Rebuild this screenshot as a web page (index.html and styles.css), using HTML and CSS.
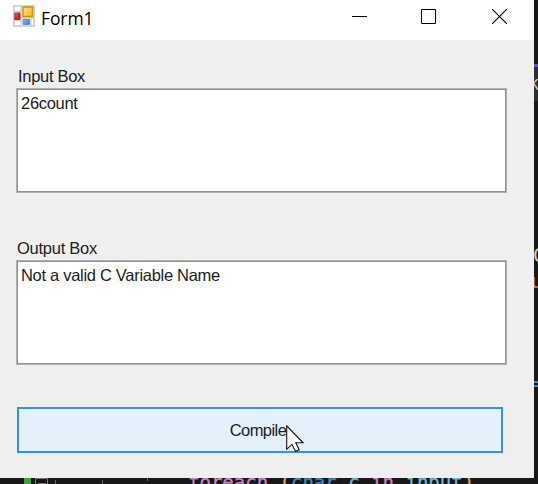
FILE: index.html
```html
<!DOCTYPE html>
<html lang="en">
<head>
<meta charset="utf-8">
<title>Form1</title>
<link rel="stylesheet" href="styles.css">
</head>
<body>
<div class="desktop">
  <div class="editor" aria-hidden="true">
    <span class="accent"></span>
    <span class="tab">k</span>
    <span class="frag frag-call">C</span>
    <span class="frag frag-string">u</span>
    <span class="frag frag-op">=</span>
    <span class="change-mark"></span>
    <svg class="guides" width="150" height="6" viewBox="0 0 150 6"><path d="M.5 6V.5h12V6M3 5.500h8" fill="none" stroke="#777"/><path d="M20.500 2v4M67.500 2v4M112.500 0v3" stroke="#666"/></svg>
    <span class="code"><span class="flow">foreach</span> <span class="brace">(</span><span class="type">char</span> <span class="var">c</span> <span class="flow">in</span> <span class="var">input</span><span class="brace">)</span></span>
  </div>
  <main class="window">
    <header class="titlebar">
      <svg class="app-icon" width="22" height="22" viewBox="0 0 22 22">
        <defs>
          <linearGradient id="gold" x2="1" y2="1"><stop stop-color="#ffe47c"/><stop offset="1" stop-color="#f2b91c"/></linearGradient>
          <linearGradient id="red" x2="1" y2="1"><stop stop-color="#e58a7c"/><stop offset=".5" stop-color="#c53328"/><stop offset="1" stop-color="#9e211a"/></linearGradient>
          <linearGradient id="blue" x2="1" y2="1"><stop stop-color="#83b5f5"/><stop offset="1" stop-color="#3c78d8"/></linearGradient>
        </defs>
        <path d="M1 1h20v20H1z" fill="#fff" stroke="#c8c8c8" stroke-width="1.600"/>
        <path d="M8 1v20M1 6.500h8M1 15.500h8M8 13h13M18 13v8" stroke="#ccc" stroke-width="1.400"/>
        <path d="M10 2h9.500v9.500H10z" fill="url(#gold)" stroke="#c39518" stroke-width="1.500"/>
        <path d="M1.800 8h5.200v6.500H1.800z" fill="url(#red)" stroke="#a82b25"/>
        <path d="M10 14.500h6.500v5H10z" fill="url(#blue)" stroke="#5b91e2"/>
      </svg>
      <h1 class="title">Form1</h1>
      <div class="controls">
        <svg width="15" height="15" viewBox="0 0 15 15"><path d="M0 7.500h15" stroke="#000"/></svg>
        <svg width="15" height="15" viewBox="0 0 15 15"><path d="M.5.5h14v14H.5z" fill="none" stroke="#000"/></svg>
        <svg class="close" width="15" height="15" viewBox="0 0 15 15"><path d="M0 0l15 15M15 0L0 15" stroke="#000" stroke-width="1.100"/></svg>
      </div>
    </header>
    <section class="form">
      <div class="label label-in">Input Box</div>
      <div class="box"><span class="value-in">26count</span></div>
      <div class="label label-out">Output Box</div>
      <div class="box"><span class="value-out">Not a valid C Variable Name</span></div>
      <button class="compile">Compile</button>
    </section>
  </main>
  <svg class="cursor" width="19" height="28" viewBox="0 0 19 28"><path d="M.7.8v23.500l5.300-5 3.500 7.200 3.700-1.700-3.400-7h7.300z" fill="#fff" stroke="#111" stroke-width="1.100"/></svg>
</div>
</body>
</html>
```
FILE: styles.css
```css
* { box-sizing: border-box; }
body { margin: 0; overflow: hidden; }
.desktop {
  position: relative;
  width: 538px;
  height: 484px;
  overflow: hidden;
  background: #181818;
  font-family: "Liberation Sans", Arial, sans-serif;
}
.window {
  position: relative;
  width: 534px;
  height: 478px;
  background: #efefef;
}
.titlebar {
  display: flex;
  align-items: flex-start;
  height: 40px;
  padding: 5px 27px 0 13px;
  background: #fff;
}
.title {
  margin: 2px 0 0 6px;
  font: 400 17.500px/22px "Open Sans", "Noto Sans", sans-serif;
  letter-spacing: -0.1px;
  color: #000;
}
.controls {
  display: flex;
  gap: 54px;
  margin: 4px 0 0 auto;
}
.controls svg { display: block; }
.controls .close { margin-left: 2px; }
.form {
  display: flex;
  flex-direction: column;
  padding: 26px 27px 0 16px;
  font-size: 16.500px;
  line-height: 20px;
  color: #1c1c24;
}
.label { height: 22px; white-space: nowrap; }
.label-in { padding-left: 2px; letter-spacing: -0.3px; }
.label-out { margin-top: 45px; padding-left: 1px; letter-spacing: -0.25px; }
.box {
  height: 105px;
  padding: 4px;
  background: #fff;
  border: 1px solid #b0b0b0;
  box-shadow: inset 0 0 0 1px #929292;
  white-space: nowrap;
}
.value-in, .value-out { letter-spacing: -0.3px; }
.compile {
  width: 486px;
  height: 46px;
  margin: 42px 0 0 1px;
  padding: 0 4px 0 0;
  border: 2px solid #3493e0;
  background: #e4f0fa;
  color: #1c1c24;
  font: inherit;
  letter-spacing: -0.55px;
}
.cursor { position: absolute; left: 286px; top: 425px; }
.editor {
  position: absolute;
  inset: 0;
  font: 19px/24px "DejaVu Sans Mono", monospace;
}
.editor > * { position: absolute; }
.accent { left: 534px; top: 64px; width: 4px; height: 3px; background: #6552c6; }
.tab { left: 528px; top: 67px; width: 10px; height: 34px; background: #2e2e2e; color: #c9b9a4; line-height: 32px; }
.frag-call { left: 533px; top: 243px; color: #d5d5b8; }
.frag-string { left: 531px; top: 269px; color: #ce8060; }
.frag-op { left: 533px; top: 371px; color: #4a91cf; }
.change-mark { left: 24px; top: 478px; width: 7px; height: 6px; background: #469b49; }
.guides { left: 35px; top: 478px; }
.code { left: 188px; top: 470px; white-space: pre; color: #ddd; -webkit-text-stroke: 0.3px currentColor; }
.flow { color: #c586c0; }
.brace { color: #d6a36f; }
.type { color: #4585bd; }
.var { color: #75b7da; }
```
